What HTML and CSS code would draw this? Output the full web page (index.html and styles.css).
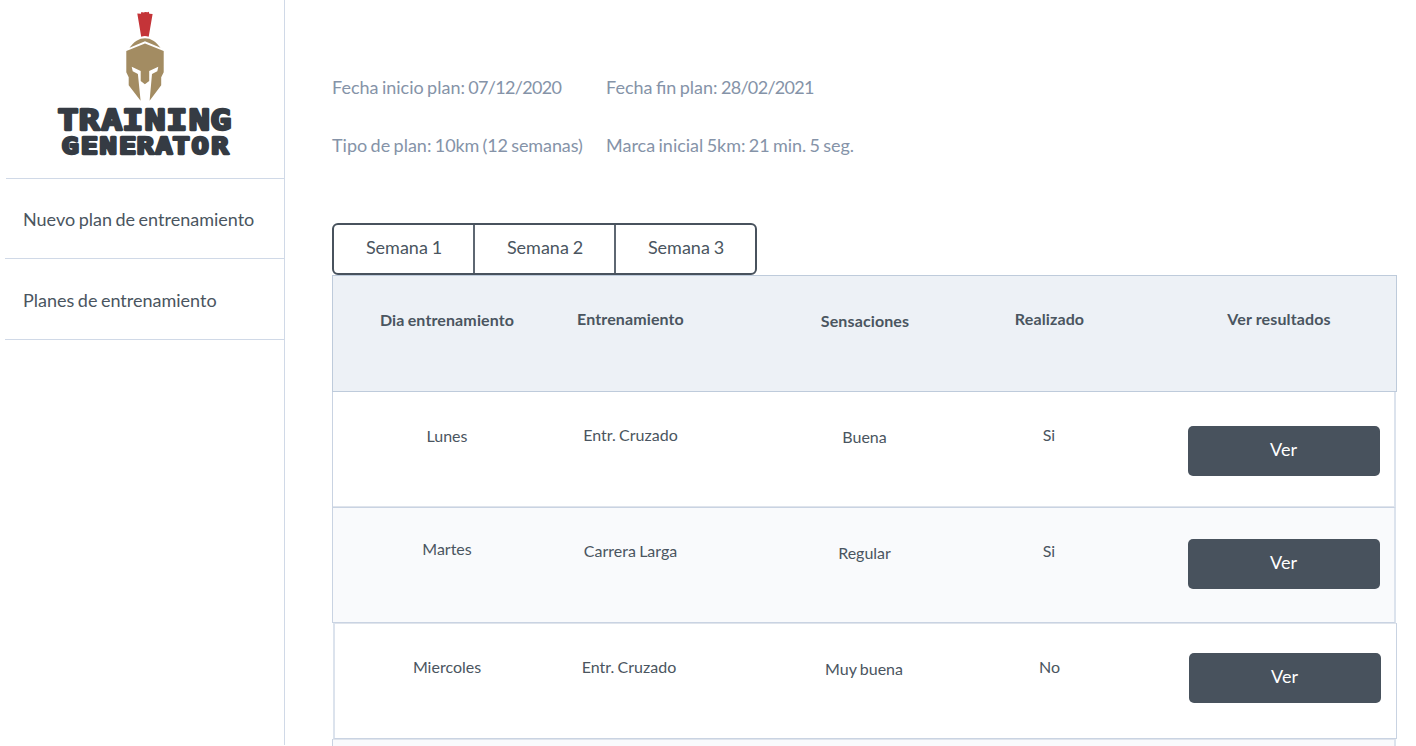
FILE: index.html
```html
<!DOCTYPE html>
<html lang="es">
<head>
<meta charset="utf-8">
<title>Training Generator</title>
<link rel="stylesheet" href="styles.css">
</head>
<body>
<div class="app">
  <aside class="sidebar">
    <div class="brand">
      <svg class="logo" width="190" height="170" viewBox="0 0 190 170" role="img" aria-label="Training Generator">
        <path fill="#c43438" d="M87.3 13.5 91 13.8 91.3 12 93.5 12.5 95.3 12 97.5 12.3 98.8 11.8 99.3 13.7 102.6 14 98.7 36.8Q94.8 35.2 91.2 36.8Z"/>
        <path fill="#a38c62" d="M79.500 47.800C84 41.500 89 38.200 95 38.200S106 41.500 110.500 47.800L95 41.300Z"/>
        <path fill="#a38c62" d="M95 43.600 113.700 50.900V72.300L111.200 77.300V85.300L99.600 100.800 102 74 107.300 71.300 108.300 66.700 99.200 71V81L94.900 84.300 90.700 81V71L81.700 66.700 82.700 71.300 87.900 74 90.600 100.800 78.700 85.300V77.300L76.300 72.300V50.900Z"/>
        <g class="wordmark">
          <text transform="translate(0 129.900) scale(1.250 1)" font-size="28" x="6 23.100 41.100 57.900 75.700 93 111 128.200">TRAINING</text>
          <text transform="translate(0 154.400) scale(1.280 1)" font-size="22.500" x="8.900 24.100 38.700 54 67.700 82.300 95.700 110.500 126">GENERATOR</text>
        </g>
      </svg>
    </div>
    <nav class="menu">
      <a class="menu-item">Nuevo plan de entrenamiento</a>
      <a class="menu-item menu-item-last">Planes de entrenamiento</a>
    </nav>
  </aside>
  <main class="content">
    <section class="summary">
      <span>Fecha inicio plan: <span class="date">07/12/2020</span></span><span>Fecha fin plan: <span class="date">28/02/2021</span></span>
      <span>Tipo de plan: <span class="value">10km (12 semanas)</span></span><span>Marca inicial <span class="mark">5km: 21 min. 5 seg.</span></span>
    </section>
    <div class="tabs"><span class="tab">Semana 1</span><span class="tab">Semana 2</span><span class="tab">Semana 3</span></div>
    <div class="table">
      <div class="row head"><span class="day">Dia entrenamiento</span><span>Entrenamiento</span><span class="feeling">Sensaciones</span><span>Realizado</span><span class="result">Ver resultados</span></div>
      <div class="row monday"><span class="day">Lunes</span><span>Entr. Cruzado</span><span class="feeling">Buena</span><span>Si</span><a class="button">Ver</a></div>
      <div class="row tuesday"><span class="day">Martes</span><span>Carrera Larga</span><span class="feeling">Regular</span><span>Si</span><a class="button">Ver</a></div>
      <div class="row wednesday"><span class="day">Miercoles</span><span>Entr. Cruzado</span><span class="feeling">Muy buena</span><span>No</span><a class="button">Ver</a></div>
      <div class="row next"></div>
    </div>
  </main>
</div>
</body>
</html>
```
FILE: styles.css
```css
* { box-sizing: border-box; }
body { margin: 0; background: #fff; color: #4a5560; font: 16px/24px Lato, sans-serif; word-spacing: -.8px; }
.app { display: flex; height: 746px; overflow: hidden; }
.sidebar { width: 285px; height: 745px; padding-left: 5px; border-right: 1px solid #d0d9e7; flex: none; }
.brand { height: 179px; margin-left: 1px; border-bottom: 1px solid #d0d9e7; }
.logo { display: block; margin-left: 44px; }
.wordmark { font-family: "DejaVu Sans Mono", monospace; font-weight: 700; fill: #353b43; stroke: #353b43; stroke-width: 2.300; stroke-linejoin: round; word-spacing: 0; }
.menu-item { display: block; height: 80px; padding: 28px 0 0 18px; border-bottom: 1px solid #d0d9e7; font-size: 18px; word-spacing: -1.1px; }
.menu-item-last { height: 81px; padding-top: 29px; }
.content { flex: none; width: 1131px; padding: 75px 0 0 47px; }
.summary { display: grid; grid-template-columns: 274px 300px; row-gap: 34px; height: 148px; align-content: start; color: #8593a8; font-size: 18px; word-spacing: -1.2px; }
.date { letter-spacing: -.68px; }
.value { letter-spacing: -.1px; }
.mark { letter-spacing: -.05px; }
.tabs { display: flex; width: 425px; height: 52px; border: 2px solid #48525d; border-radius: 6px; font-size: 18px; }
.tab { flex: 1; padding: 10px 0 0 1px; text-align: center; }
.tab + .tab { border-left: 2px solid #5e6772; }
.table { width: 1065px; }
.row { display: grid; grid-template-columns: 180px 187px 282px 86px 192px; align-items: start; width: 1064px; height: 116px; padding: 31px 0 0 24px; border: 1px solid #c9d3e2; border-top: 0; text-align: center; }
.row > :last-child { margin-left: 96px; margin-right: -96px; }
.day { padding-top: 1px; }
.feeling { padding-top: 2px; }
.row .feeling { margin-left: -1px; }
.head { width: 1065px; height: 117px; border: 1px solid #becbdb; background: #edf1f6; font-weight: 700; letter-spacing: .12px; }
.row.head .feeling { margin-left: 0; }
.head > :nth-child(4) { padding-left: 1px; }
.result { padding-right: 10px; word-spacing: 0; }
.button { height: 50px; margin-top: 3px; padding: 11px 1px 0 0; border-radius: 5px; background: #48525d; color: #fff; font-size: 18px; }
.monday, .tuesday { border-right: 2px solid #dce3ed; }
.monday { box-shadow: inset 0 -1px #dfe4ec; }
.tuesday { height: 115px; background: #f9fafc; }
.tuesday .day { margin-top: -2px; padding: 0; }
.tuesday .button { margin-top: 0; }
.wednesday { width: 1064px; margin-left: 1px; padding: 32px 0 0 22px; border-left: 2px solid #dce3ed; box-shadow: inset 0 1px #dfe4ec; }
.wednesday > :nth-child(2) { margin-left: -3px; }
.wednesday > :nth-child(4) { padding-left: 1px; }
.wednesday .day { padding: 0; }
.row.wednesday .feeling { margin-left: -2px; }
.row.wednesday .button { margin: -2px -97px 0 97px; }
.next { background: #f9fafc; box-shadow: inset 0 1px #dfe4ec; border-right: 2px solid #dce3ed; }
```
